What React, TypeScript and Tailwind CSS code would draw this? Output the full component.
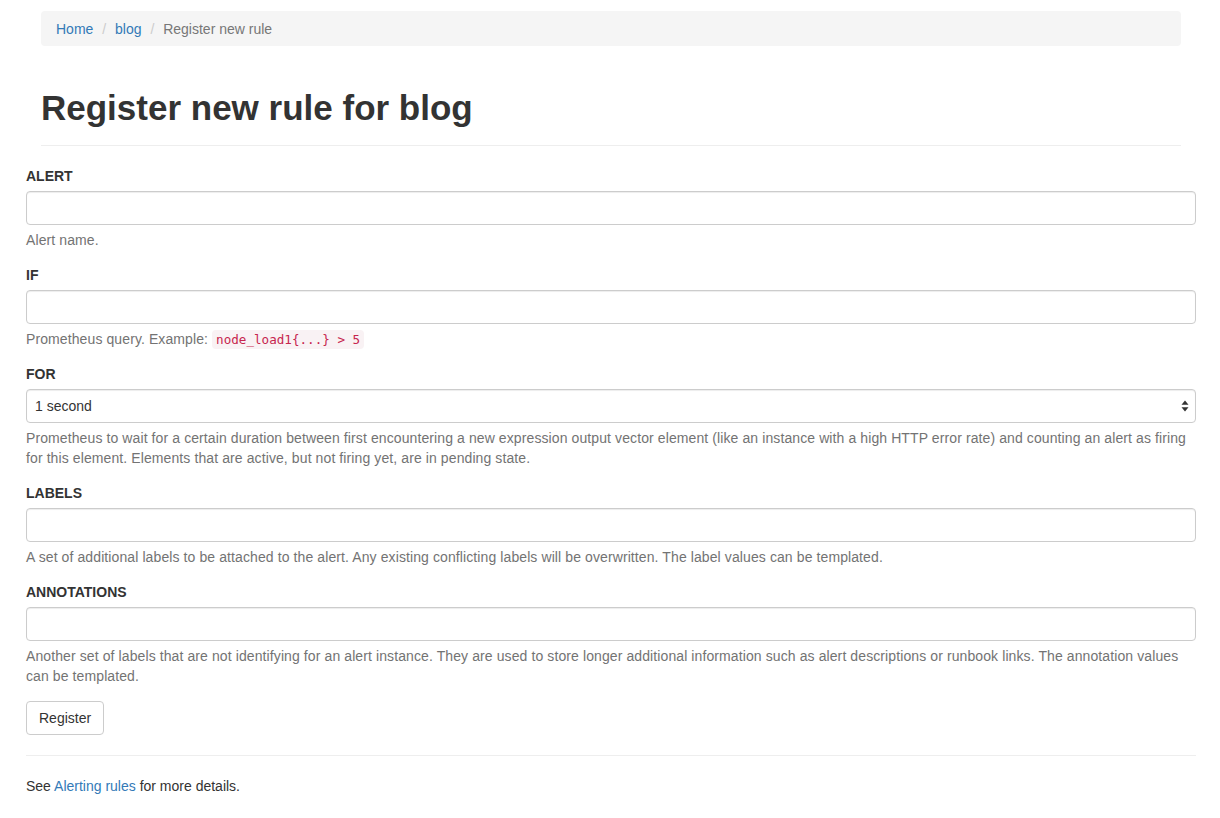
import { useState } from 'react';

const durations = ['1 second', '10 seconds', '1 minute', '5 minutes', '10 minutes', '30 minutes', '1 hour'];

function Field({ label, help, children }: { label: string; help: React.ReactNode; children: React.ReactNode }) {
  return (
    <div className="mb-[15px]">
      <label className="mb-[5px] block text-[14px] font-bold leading-[20px] text-[#333]">{label}</label>
      {children}
      <p className="mt-[5px] text-[14px] leading-[20px] tracking-[0.1px] text-[#737373]">{help}</p>
    </div>
  );
}

function TextInput() {
  return (
    <input
      type="text"
      className="block h-[34px] w-full rounded-[4px] border border-[#ccc] bg-white px-3 text-[14px] text-[#555] shadow-[inset_0_1px_1px_rgba(0,0,0,0.075)] outline-none"
    />
  );
}

function Sep() {
  return <span className="px-[5px] text-[#ccc]">/{'\u00a0'}</span>;
}

export default function App() {
  const [duration, setDuration] = useState(durations[0]);

  return (
    <div className="min-h-[818px] bg-white font-['Liberation_Sans',Arial,sans-serif] text-[14px] leading-[20px] text-[#333]">
      <div className="ml-[26px] w-[1170px] pt-[11px]">
        {/* Breadcrumb */}
        <div className="px-[15px]">
          <div className="flex h-[35px] items-center whitespace-pre rounded-[4px] bg-[#f5f5f5] px-[15px]">
            <a href="#" className="text-[#337ab7]">Home</a>
            <span> </span>
            <Sep />
            <a href="#" className="text-[#337ab7]">blog</a>
            <span> </span>
            <Sep />
            <span className="text-[#777]">Register new rule</span>
          </div>

          {/* Page header */}
          <div className="mt-[42px] mb-[20px] border-b border-[#eee] pb-[9px]">
            <h1 className="mb-[8px] text-[35px] font-bold leading-[39.6px] text-[#333]">Register new rule for blog</h1>
          </div>
        </div>

        <form onSubmit={(e) => e.preventDefault()}>
          <Field label="ALERT" help="Alert name.">
            <TextInput />
          </Field>

          <Field
            label="IF"
            help={
              <>
                Prometheus query. Example:{' '}
                <code className="rounded-[4px] bg-[#f9f2f4] px-[4px] py-[2px] font-['DejaVu_Sans_Mono',Menlo,monospace] text-[12.6px] leading-none tracking-normal text-[#c7254e]">
                  node_load1{'{...}'} &gt; 5
                </code>
              </>
            }
          >
            <TextInput />
          </Field>

          <Field
            label="FOR"
            help="Prometheus to wait for a certain duration between first encountering a new expression output vector element (like an instance with a high HTTP error rate) and counting an alert as firing for this element. Elements that are active, but not firing yet, are in pending state."
          >
            <div className="relative">
              <select
                value={duration}
                onChange={(e) => setDuration(e.target.value)}
                className="block h-[34px] w-full appearance-none rounded-[4px] border border-[#ccc] bg-white pl-[8px] text-[14px] text-[#333] shadow-[inset_0_1px_1px_rgba(0,0,0,0.075)] outline-none"
              >
                {durations.map((d) => (
                  <option key={d}>{d}</option>
                ))}
              </select>
              <svg className="pointer-events-none absolute right-[7px] top-[11px]" width="8" height="12" viewBox="0 0 8 12">
                <path d="M4 0.5L7.5 4.8H0.5Z" fill="#333" />
                <path d="M4 11.5L7.5 7.2H0.5Z" fill="#333" />
              </svg>
            </div>
          </Field>

          <Field
            label="LABELS"
            help="A set of additional labels to be attached to the alert. Any existing conflicting labels will be overwritten. The label values can be templated."
          >
            <TextInput />
          </Field>

          <Field
            label="ANNOTATIONS"
            help="Another set of labels that are not identifying for an alert instance. They are used to store longer additional information such as alert descriptions or runbook links. The annotation values can be templated."
          >
            <TextInput />
          </Field>

          <button
            type="submit"
            className="h-[34px] rounded-[4px] border border-[#ccc] bg-white px-[12px] text-[14px] text-[#333]"
          >
            Register
          </button>
        </form>

        <hr className="my-[20px] border-t border-[#eee]" />

        <p>
          See{' '}
          <a href="#" className="text-[#337ab7]">
            Alerting rules
          </a>{' '}
          for more details.
        </p>
      </div>
    </div>
  );
}
